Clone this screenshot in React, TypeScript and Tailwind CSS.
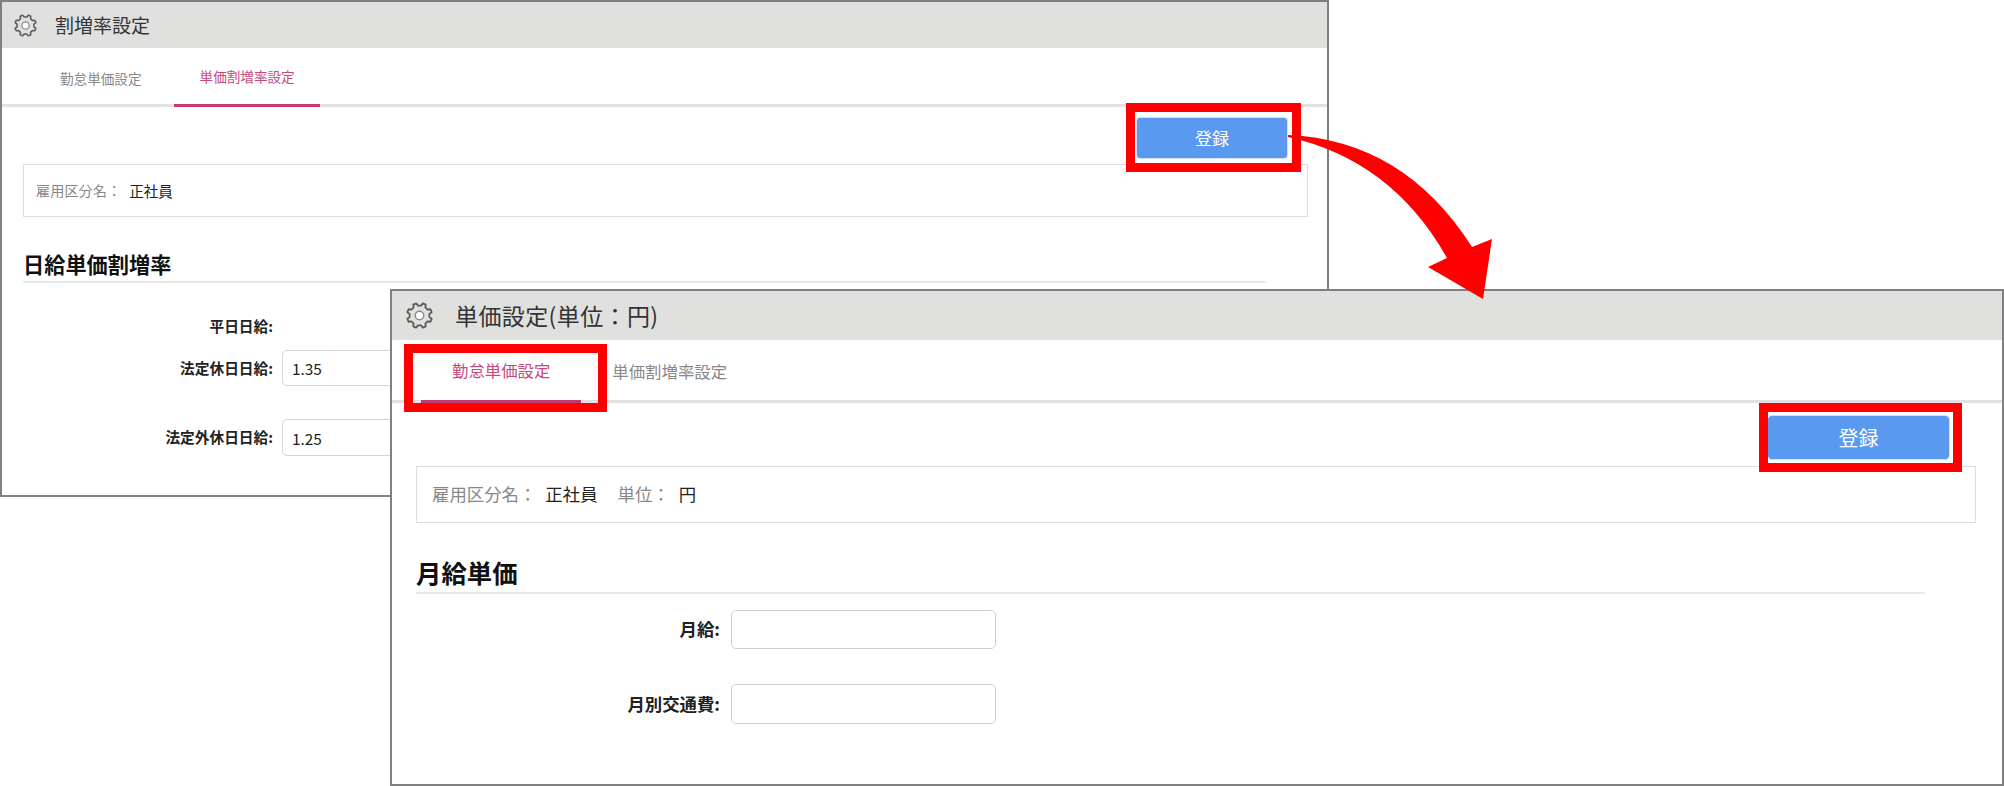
const FONT = "font-['Noto_Sans_CJK_JP','Liberation_Sans',sans-serif]"

// 8 tooth gear outline, drawn on a 24 unit box
const GEAR_POINTS = Array.from({ length: 8 }, (_, i) => {
  const step = Math.PI / 4
  const a = i * step + step / 2
  return [
    [8.9, a - 0.3 * step],
    [11.2, a - 0.16 * step],
    [11.2, a + 0.16 * step],
    [8.9, a + 0.3 * step],
  ]
    .map(([r, t]) => `${(12 + r * Math.cos(t)).toFixed(2)},${(12 + r * Math.sin(t)).toFixed(2)}`)
    .join(' ')
}).join(' ')

function GearIcon({ className }: { className: string }) {
  return (
    <svg className={className} viewBox="0 0 24 24" fill="none" stroke="#5c5c5c" strokeWidth={1.6} strokeLinejoin="round">
      <polygon points={GEAR_POINTS} />
      <circle cx="12" cy="12" r="3.8" fill="#ffffff" strokeWidth={1.3} stroke="#8a8a8a" />
    </svg>
  )
}

function CalloutArrow() {
  return (
    <svg className="absolute left-[1280px] top-[125px] z-20" width="220" height="180" viewBox="1280 125 220 180">
      <path
        d="M1288 135 Q1404 140 1472 247 L1492 239 L1483 299 L1428 267 L1447 258 Q1392 160 1288 137 Z"
        fill="#ff0000"
      />
    </svg>
  )
}

export default function App() {
  return (
    <div className={`relative h-[786px] w-[2004px] overflow-hidden bg-white ${FONT}`}>
      {/* back window */}
      <section className="absolute left-0 top-0 h-[497px] w-[1329px] border-2 border-[#808080] bg-white">
        <header className="flex h-[46px] items-center gap-[18px] bg-[#e0e0de] pl-[12px] text-[#333]">
          <GearIcon className="h-[23px] w-[23px]" />
          <h1 className="text-[19px] font-normal">割増率設定</h1>
        </header>
        <nav className="flex h-[59px] gap-[7px] border-b-[3px] border-[#e2e2e2] pl-[33px] text-[13.6px]">
          <div className="-mb-[3px] flex items-center px-[25px] pt-[1px] text-[#888]">勤怠単価設定</div>
          <div className="-mb-[3px] flex items-center border-b-[3px] border-[#c73a73] pl-[26px] pr-[25px] pt-[1px] text-[#c8487e]">
            単価割増率設定
          </div>
        </nav>
        <div className="flex justify-end pr-[39px] pt-[10px]">
          <button className="h-[42px] w-[152px] rounded-[4px] border border-[#cfe0f8] bg-[#5a99f0] text-[17px] text-white">
            登録
          </button>
        </div>
        <div className="ml-[21px] mr-[19px] mt-[5px] flex h-[53px] items-center border border-[#dedede] pl-[12px] text-[14.2px]">
          <span className="text-[#888]">雇用区分名：</span>
          <span className="ml-[8px] text-[14.6px] text-[#222]">正社員</span>
        </div>
        <h2 className="ml-[21px] mt-[31px] h-[35px] w-[1243px] border-b-2 border-[#e8e8e8] text-[21.2px] font-bold text-[#111]">
          日給単価割増率
        </h2>
        <div className="ml-[21px] mt-[32px] flex h-[22px] items-center">
          <label className="w-[250px] text-right text-[14.7px] font-bold text-[#222]">平日日給:</label>
        </div>
        <div className="ml-[21px] mt-[13px] flex items-center gap-[9px]">
          <label className="w-[250px] text-right text-[14.7px] font-bold text-[#222]">法定休日日給:</label>
          <input
            readOnly
            defaultValue="1.35"
            className="h-[36px] w-[220px] rounded-[5px] border border-[#d4d4d4] px-[9px] text-[15.4px] text-[#222]"
          />
        </div>
        <div className="ml-[21px] mt-[33px] flex items-center gap-[9px]">
          <label className="w-[250px] text-right text-[14.7px] font-bold text-[#222]">法定外休日日給:</label>
          <input
            readOnly
            defaultValue="1.25"
            className="h-[37px] w-[220px] rounded-[5px] border border-[#d4d4d4] px-[9px] text-[15.4px] text-[#222]"
          />
        </div>
      </section>

      {/* front window */}
      <section className="absolute left-[390px] top-[289px] z-10 h-[497px] w-[1614px] border-2 border-[#808080] bg-white">
        <header className="flex h-[49px] items-center gap-[22px] bg-[#e0e0de] pl-[14px] text-[#333]">
          <GearIcon className="h-[27px] w-[27px]" />
          <h1 className="text-[23px] font-normal tracking-[0.4px]">単価設定(単位：円)</h1>
        </header>
        <nav className="flex h-[63px] border-b-[3px] border-[#e2e2e2] pl-[29px] text-[16.4px]">
          <div className="-mb-[3px] flex items-center border-b-[3px] border-[#c73a73] px-[31px] text-[#c8487e]">
            勤怠単価設定
          </div>
          <div className="-mb-[3px] flex items-center px-[31px] text-[#888]">単価割増率設定</div>
        </nav>
        <div className="flex justify-end pr-[52px] pt-[12px]">
          <button className="h-[45px] w-[183px] rounded-[5px] border border-[#cfe0f8] bg-[#5a99f0] text-[20px] text-white">
            登録
          </button>
        </div>
        <div className="ml-[24px] mr-[26px] mt-[6px] flex h-[57px] items-center border border-[#dedede] pl-[15px] text-[17.4px]">
          <span className="text-[#888]">雇用区分名：</span>
          <span className="ml-[9px] text-[#222]">正社員</span>
          <span className="ml-[20px] text-[#888]">単位：</span>
          <span className="ml-[9px] text-[#222]">円</span>
        </div>
        <h2 className="ml-[24px] mt-[30px] h-[41px] w-[1509px] border-b-2 border-[#e8e8e8] text-[25.4px] font-bold text-[#111]">
          月給単価
        </h2>
        <div className="ml-[24px] mt-[16px] flex items-center gap-[11px]">
          <label className="w-[304px] text-right text-[17.4px] font-bold text-[#222]">月給:</label>
          <input className="h-[39px] w-[265px] rounded-[5px] border border-[#cfcfcf]" />
        </div>
        <div className="ml-[24px] mt-[35px] flex items-center gap-[11px]">
          <label className="w-[304px] text-right text-[17.4px] font-bold text-[#222]">月別交通費:</label>
          <input className="h-[40px] w-[265px] rounded-[5px] border border-[#cfcfcf]" />
        </div>
      </section>

      {/* red callouts */}
      <div className="absolute left-[1126px] top-[103px] z-20 h-[69px] w-[175px] border-[9px] border-[#ff0000]" />
      <div className="absolute left-[404px] top-[344px] z-20 h-[68px] w-[203px] border-[9px] border-[#ff0000]" />
      <div className="absolute left-[1759px] top-[403px] z-20 h-[69px] w-[203px] border-[9px] border-[#ff0000]" />
      <CalloutArrow />
    </div>
  )
}
